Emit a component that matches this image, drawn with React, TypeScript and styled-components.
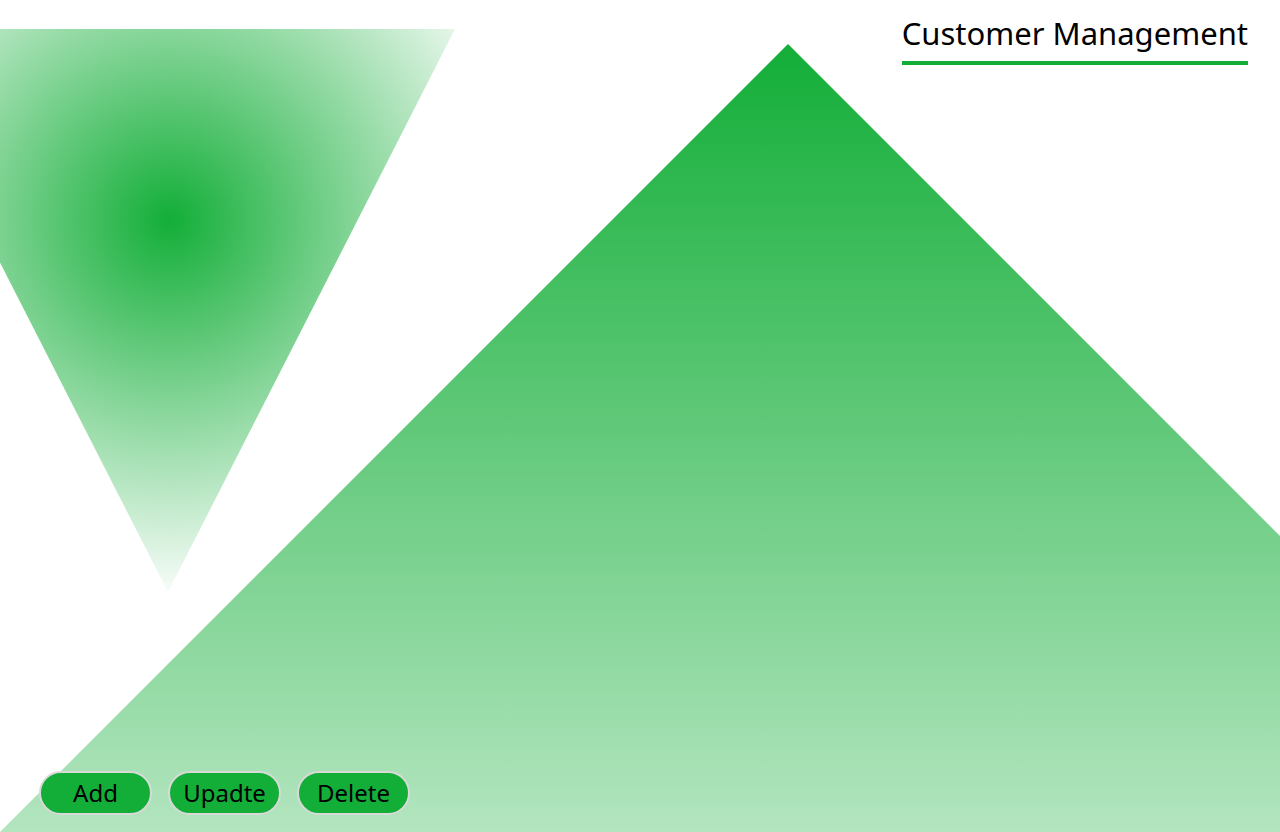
import React from 'react';
import styled, { createGlobalStyle } from 'styled-components';

const GlobalStyle = createGlobalStyle`
  html, body {
    margin: 0;
    padding: 0;
    background: #fff;
    font-family: "Noto Sans", "Open Sans", sans-serif;
  }
`;

const green = '#13ae38';

const Page = styled.div`
  position: relative;
  width: 100%;
  height: 100vh;
  overflow: hidden;
  display: flex;
  flex-direction: column;
  justify-content: space-between;
`;

// decorative background shapes, they sit under the content
const FadeTriangle = styled.div`
  position: absolute;
  left: -119px;
  top: 29px;
  width: 574px;
  height: 563px;
  clip-path: polygon(0 0, 100% 0, 50% 100%);
  background: radial-gradient(circle at 289px 191px, ${green} 0, rgba(19, 174, 56, 0) 385px);
`;

const Mountain = styled.div`
  position: absolute;
  left: 0;
  top: 44px;
  width: 1576px;
  height: 788px;
  clip-path: polygon(50% 0, 100% 100%, 0 100%);
  background: linear-gradient(to bottom, ${green}, rgba(19, 174, 56, 0.32));
`;

const Header = styled.header`
  position: relative;
  display: flex;
  justify-content: flex-end;
  padding: 11px 32px 0 0;
`;

const Title = styled.h1`
  margin: 0;
  font-size: 31px;
  font-weight: 400;
  line-height: 44px;
  color: #000;
  padding-bottom: 6px;
  border-bottom: 4px solid ${green};
`;

const Toolbar = styled.div`
  position: relative;
  display: flex;
  gap: 16px;
  padding: 0 0 17px 39px;
`;

const Button = styled.button`
  width: 113px;
  height: 44px;
  border-radius: 22px;
  border: 2px solid #d9d9d9;
  background: ${green};
  color: #000;
  font-family: inherit;
  font-size: 24px;
  line-height: 1;
  padding: 0;
  cursor: pointer;
`;

const App = () => {
  return (
    <>
      <GlobalStyle />
      <Page>
        <FadeTriangle />
        <Mountain />
        <Header>
          <Title>Customer Management</Title>
        </Header>
        <Toolbar>
          <Button>Add</Button>
          <Button>Upadte</Button>
          <Button>Delete</Button>
        </Toolbar>
      </Page>
    </>
  );
};

export default App;
